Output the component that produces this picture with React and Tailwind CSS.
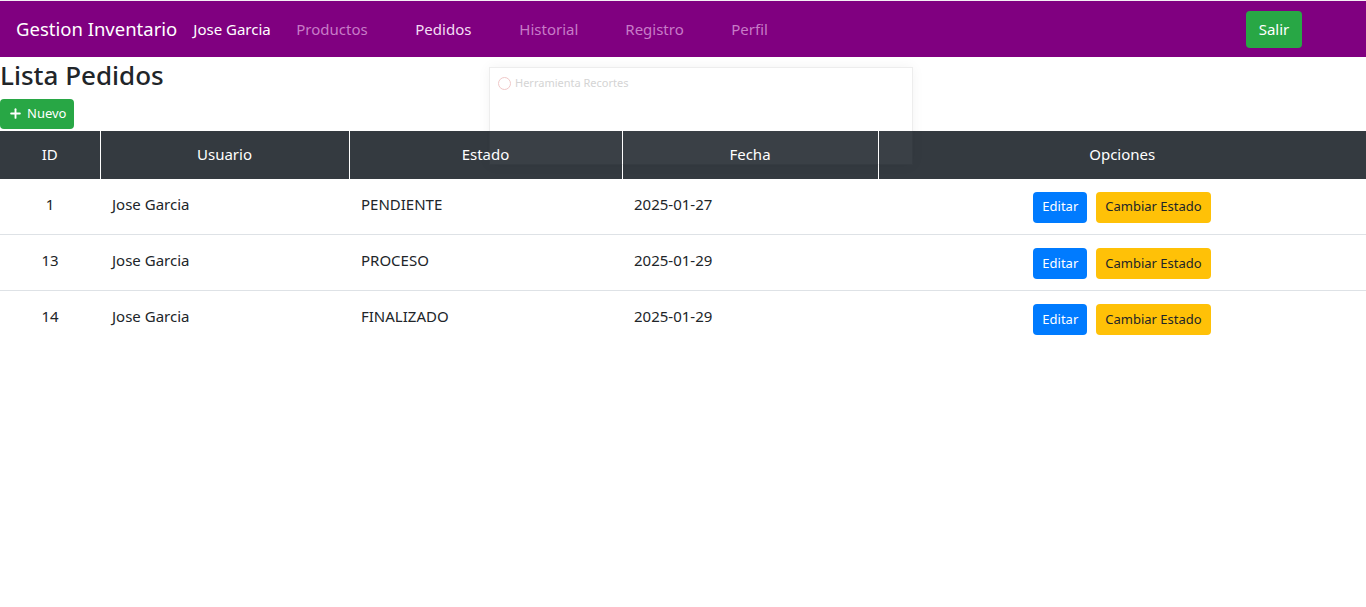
import { Plus } from 'lucide-react'

const pedidos = [
  { id: 1, usuario: 'Jose Garcia', estado: 'PENDIENTE', fecha: '2025-01-27' },
  { id: 13, usuario: 'Jose Garcia', estado: 'PROCESO', fecha: '2025-01-29' },
  { id: 14, usuario: 'Jose Garcia', estado: 'FINALIZADO', fecha: '2025-01-29' },
]

const links = [
  { label: 'Productos', w: 'w-[119px]', active: false },
  { label: 'Pedidos', w: 'w-[104px]', active: true },
  { label: 'Historial', w: 'w-[106px]', active: false },
  { label: 'Registro', w: 'w-[106px]', active: false },
  { label: 'Perfil', w: 'w-[60px]', active: false },
]

export default function App() {
  return (
    <div className="relative min-h-screen bg-white text-[#212529] font-['Noto_Sans',sans-serif]">
      <nav className="h-[57px] border-t border-[#f4eef4] bg-[#800080] flex items-center pl-4 pr-16">
        <span className="text-white text-[18.5px] mr-[16px]">Gestion Inventario</span>
        <span className="text-white text-[15px] w-[103px]">Jose Garcia</span>
        {links.map((l) => (
          <span
            key={l.label}
            className={`${l.w} text-[15px] ${l.active ? 'text-[#f3ddf3]' : 'text-[#c77bc7]'}`}
          >
            {l.label}
          </span>
        ))}
        <button className="ml-auto bg-[#28a745] text-white text-[15px] rounded h-[37px] w-[56px]">
          Salir
        </button>
      </nav>

      <h1 className="text-[26px] font-medium leading-tight mt-[2px] mb-[7px]">Lista Pedidos</h1>

      <button className="bg-[#28a745] text-white text-[13px] rounded h-[30px] px-2 flex items-center gap-1">
        <Plus size={15} strokeWidth={3} />
        Nuevo
      </button>

      <table className="w-full border-collapse mt-[2px] text-[15px]">
        <thead>
          <tr className="bg-[#343a40] text-white h-[48px]">
            <th className="w-[100px] font-normal border-r border-white">ID</th>
            <th className="w-[249px] font-normal border-r border-white">Usuario</th>
            <th className="w-[273px] font-normal border-r border-white">Estado</th>
            <th className="w-[256px] font-normal border-r border-white">Fecha</th>
            <th className="font-normal">Opciones</th>
          </tr>
        </thead>
        <tbody>
          {pedidos.map((p, i) => (
            <tr key={p.id} className={`h-[56px] ${i > 0 ? 'border-t border-[#dee2e6]' : ''}`}>
              <td className="text-center align-top pt-[14px]">{p.id}</td>
              <td className="px-3 align-top pt-[14px]">{p.usuario}</td>
              <td className="px-3 align-top pt-[14px]">{p.estado}</td>
              <td className="px-3 align-top pt-[14px]">{p.fecha}</td>
              <td className="align-top pt-[13px]">
                <div className="flex justify-center gap-[9px]">
                  <button className="bg-[#007bff] text-white text-[13px] rounded h-[31px] px-[9px]">
                    Editar
                  </button>
                  <button className="bg-[#ffc107] text-[#212529] text-[13px] rounded h-[31px] px-[9px]">
                    Cambiar Estado
                  </button>
                </div>
              </td>
            </tr>
          ))}
        </tbody>
      </table>

      {/* ghost snipping tool window */}
      <div className="absolute left-[489px] top-[67px] w-[424px] h-[98px] border border-black/[0.07] bg-white/[0.03] shadow-[0_0_12px_rgba(0,0,0,0.05)] pointer-events-none">
        <div className="flex items-center gap-1 px-2 pt-[7px] text-[11px] text-[#d4d4d4]">
          <span className="inline-block w-[13px] h-[13px] rounded-full border border-[#f0c8c8]" />
          Herramienta Recortes
        </div>
      </div>
    </div>
  )
}
